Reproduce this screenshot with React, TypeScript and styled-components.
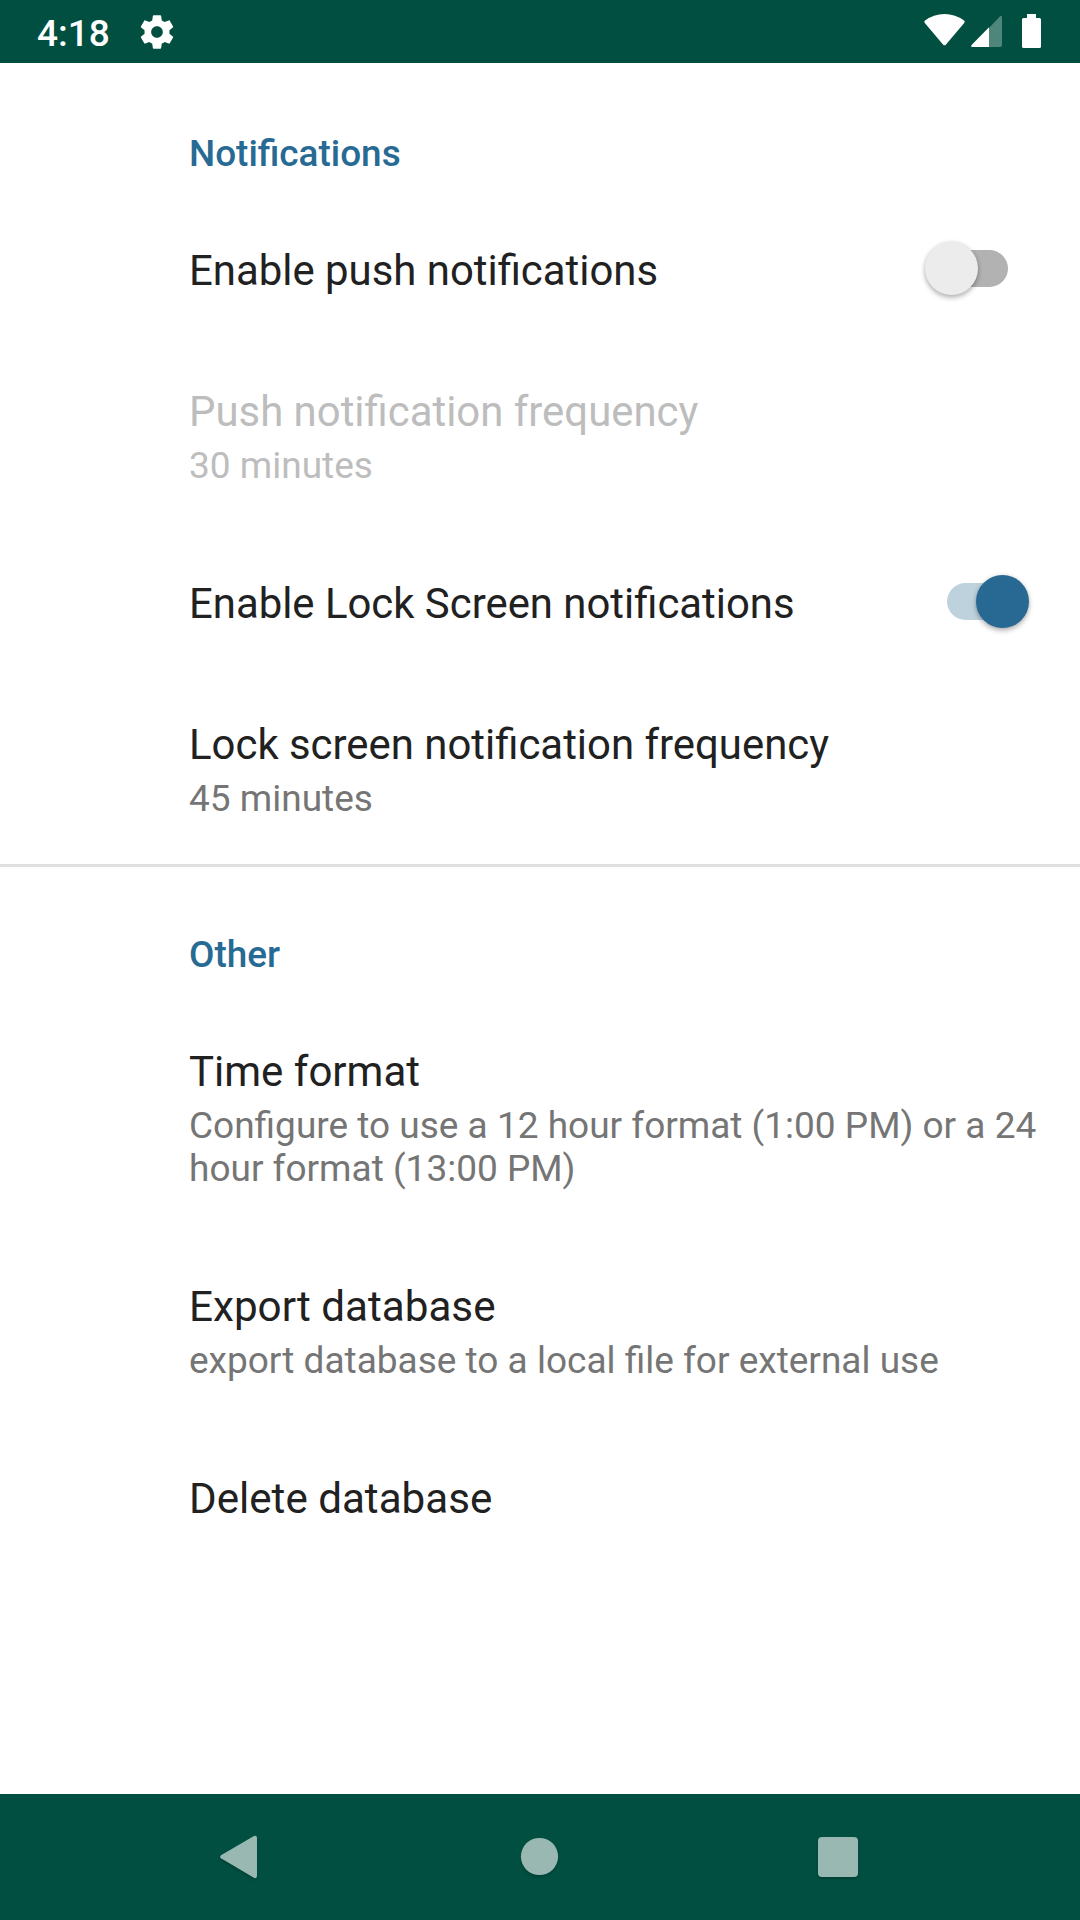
import React from 'react';
import styled, { createGlobalStyle } from 'styled-components';

const GlobalStyle = createGlobalStyle`
  * { box-sizing: border-box; }
  body { margin: 0; background: #fff; font-family: Roboto, sans-serif; }
  svg { display: block; flex: none; }
`;
const Screen = styled.div`
  width: 1080px; height: 1920px; display: flex; flex-direction: column; background: #fff; overflow: hidden;
`;
const StatusBar = styled.header`
  height: 63px; flex: none; background: #004f41; color: #fff; display: flex; align-items: flex-start;
  padding: 0 39px 0 37px;
`;
const Clock = styled.span`
  font-size: 37px; font-weight: 500; line-height: 43px; margin-top: 12px; width: 100px;
`;
const GearIcon = styled.svg`
  width: 40px; height: 40px; margin-top: 12px; fill: #fff;
`;
const StatusIcons = styled.div`
  margin-left: auto; padding-top: 14px; display: flex; fill: #fff;
`;
const WifiIcon = styled.svg`width: 41px; height: 34px;`;
const SignalIcon = styled.svg`width: 31px; height: 34px; margin-left: 6px;`;
const BatteryIcon = styled.svg`width: 19px; height: 34px; margin-left: 20px;`;

const Content = styled.main`
  flex: 1; display: flex; flex-direction: column;
`;
const Section = styled.section<{ $divided?: boolean }>`
  padding: 0 42px 0 189px;
  box-shadow: ${p => (p.$divided ? 'inset 0 3px #e0e0e0' : 'none')};
`;
const Heading = styled.h2`
  margin: 0; height: 135px; padding-top: 69px; font-size: 36.9px; font-weight: 500; line-height: 43px; color: #276a94;
`;
const Row = styled.div`
  display: flex; align-items: center; justify-content: space-between;
`;
const Labels = styled.div<{ $disabled?: boolean }>`
  padding: 48px 0 44px;
  --title: ${p => (p.$disabled ? '#bdbdbd' : '#212121')};
  --summary: ${p => (p.$disabled ? '#bdbdbd' : '#757575')};
`;
const Title = styled.div<{ $size?: number }>`
  font-size: ${p => p.$size ?? 42}px; line-height: 49px; color: var(--title); white-space: nowrap;
`;
const Summary = styled.div`
  font-size: 37px; line-height: 43px; color: var(--summary); margin-top: 8px;
`;
const Switch = styled.div<{ $on?: boolean }>`
  width: 104px; height: 53px; margin-right: 9px; flex: none; display: flex; align-items: center;
  justify-content: ${p => (p.$on ? 'flex-end' : 'flex-start')};
`;
const Track = styled.div<{ $on?: boolean }>`
  width: 61px; height: 37px; border-radius: 19px; flex: none;
  background: ${p => (p.$on ? '#bed2de' : '#b2b2b2')};
  order: ${p => (p.$on ? 0 : 1)};
  margin: ${p => (p.$on ? '0 -32px 0 0' : '0 21px 0 -31px')};
`;
const Thumb = styled.div<{ $on?: boolean }>`
  width: 53px; height: 53px; border-radius: 50%; flex: none; z-index: 1;
  background: ${p => (p.$on ? '#276992' : '#ececec')};
  box-shadow: 0 3px 5px rgba(0, 0, 0, 0.25), 0 0 4px rgba(0, 0, 0, 0.12);
`;
const NavBar = styled.nav`
  height: 126px; flex: none; background: #004f41; display: flex; align-items: center;
  justify-content: space-between; padding: 0 220px 0 217px; fill: #9ab8b2;
`;
const NavIcon = styled.svg`
  width: 44px; height: 50px; filter: drop-shadow(0 2px 1px rgba(0, 0, 0, 0.18));
`;

function Toggle({ on }: { on?: boolean }) {
  return (
    <Switch $on={on}>
      <Track $on={on} />
      <Thumb $on={on} />
    </Switch>
  );
}

interface PreferenceProps {
  title: string;
  summary?: string;
  disabled?: boolean;
  size?: number;
  children?: React.ReactNode;
}

function Preference({ title, summary, disabled, size, children }: PreferenceProps) {
  return (
    <Row>
      <Labels $disabled={disabled}>
        <Title $size={size}>{title}</Title>
        {summary && <Summary>{summary}</Summary>}
      </Labels>
      {children}
    </Row>
  );
}

export default function App() {
  return (
    <>
      <GlobalStyle />
      <Screen>
        <StatusBar>
          <Clock>4:18</Clock>
          <GearIcon viewBox="0 0 24 24">
            <path d="M19.43 12.98c.04-.32.07-.64.07-.98s-.03-.66-.07-.98l2.11-1.65c.19-.15.24-.42.12-.64l-2-3.46c-.12-.22-.39-.3-.61-.22l-2.49 1c-.52-.4-1.08-.73-1.69-.98l-.38-2.65C14.46 2.18 14.25 2 14 2h-4c-.25 0-.46.18-.49.42l-.38 2.65c-.61.25-1.17.59-1.69.98l-2.49-1c-.23-.09-.49 0-.61.22l-2 3.46c-.13.22-.07.49.12.64l2.11 1.65c-.04.32-.07.65-.07.98s.03.66.07.98l-2.11 1.65c-.19.15-.24.42-.12.64l2 3.46c.12.22.39.3.61.22l2.49-1c.52.4 1.08.73 1.69.98l.38 2.65c.03.24.24.42.49.42h4c.25 0 .46-.18.49-.42l.38-2.65c.61-.25 1.17-.59 1.69-.98l2.49 1c.23.09.49 0 .61-.22l2-3.46c.12-.22.07-.49-.12-.64l-2.11-1.65zM12 15.5c-1.93 0-3.5-1.57-3.5-3.5s1.57-3.5 3.5-3.5 3.5 1.57 3.5 3.5-1.57 3.5-3.5 3.5z" />
          </GearIcon>
          <StatusIcons>
            <WifiIcon viewBox="0 0 41 34">
              <path d="M1 6.6Q9.500 0 20.500 0T40 6.600Q41.200 7.600 40.200 9L21.800 30.700Q20.500 32 19.200 30.700L.8 9Q-.2 7.600 1 6.600Z" />
            </WifiIcon>
            <SignalIcon viewBox="0 0 31 34">
              <path d="M18 14L29 2.300Q31 1 31 3.400V31Q31 33 29 33H18Z" fillOpacity={0.31} />
              <path d="M18 13.300V33H1.500Q-.8 33 .6 31Z" />
            </SignalIcon>
            <BatteryIcon viewBox="0 0 19 34">
              <path d="M5 0H14V4H17.500Q19 4 19 5.500V32.500Q19 34 17.500 34H1.500Q0 34 0 32.500V5.500Q0 4 1.500 4H5Z" />
            </BatteryIcon>
          </StatusIcons>
        </StatusBar>
        <Content>
          <Section>
            <Heading>Notifications</Heading>
            <Preference title="Enable push notifications" size={41.9}><Toggle /></Preference>
            <Preference title="Push notification frequency" summary="30 minutes" size={41.9} disabled />
            <Preference title="Enable Lock Screen notifications" size={41.87}><Toggle on /></Preference>
            <Preference title="Lock screen notification frequency" summary="45 minutes" size={41.9} />
          </Section>
          <Section $divided>
            <Heading>Other</Heading>
            <Preference title="Time format" summary="Configure to use a 12 hour format (1:00 PM) or a 24 hour format (13:00 PM)" />
            <Preference title="Export database" summary="export database to a local file for external use" size={42.2} />
            <Preference title="Delete database" size={42.15} />
          </Section>
        </Content>
        <NavBar>
          <NavIcon viewBox="0 0 44 50"><path d="M4 23.300L36.500 4.200Q40 2.700 40 6V43.500Q40 47.300 36.500 45.600L4 26.300Q2.300 24.800 4 23.300Z" /></NavIcon>
          <NavIcon viewBox="0 0 44 50"><circle cx={22.500} cy={24.500} r={18.600} /></NavIcon>
          <NavIcon viewBox="0 0 44 50"><rect x={2} y={5} width={40} height={40} rx={4} /></NavIcon>
        </NavBar>
      </Screen>
    </>
  );
}
